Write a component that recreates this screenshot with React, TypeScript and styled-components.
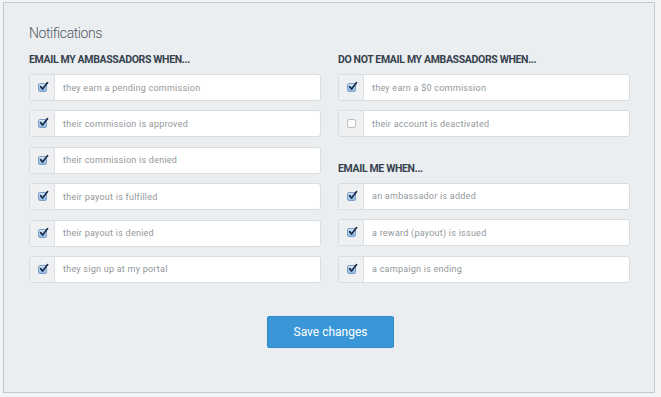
import React from "react";
import styled, { createGlobalStyle } from "styled-components";

const GlobalStyle = createGlobalStyle`
  html, body {
    margin: 0;
    padding: 0;
    background: #f1f3f4;
  }
  body {
    font-family: Roboto, "Open Sans", sans-serif;
  }
`;

const Page = styled.div`
  width: 661px;
  height: 397px;
  box-sizing: border-box;
  padding: 2px 6px 4px 3px;
`;

const Panel = styled.section`
  box-sizing: border-box;
  height: 100%;
  background: #ebeef0;
  border: 1px solid #c3c8cc;
  padding: 20px 24px 0 25px;
`;

const Title = styled.h2`
  margin: 0 0 10px;
  font-family: Roboto, sans-serif;
  font-weight: 300;
  font-size: 14px;
  line-height: 20px;
  color: #4f5962;
  letter-spacing: -0.4px;
`;

const Columns = styled.div`
  display: grid;
  grid-template-columns: 292px 292px;
  column-gap: 17px;
`;

const Column = styled.div`
  display: flex;
  flex-direction: column;
`;

const Heading = styled.h3<{ $spaced?: boolean }>`
  margin: ${(p) => (p.$spaced ? "24.6px" : "0")} 0 7px;
  font-family: Roboto, sans-serif;
  font-weight: 700;
  font-size: 10.5px;
  line-height: 14px;
  color: #36424e;
  letter-spacing: -0.35px;
  text-transform: uppercase;
`;

const List = styled.div`
  display: flex;
  flex-direction: column;
  gap: 9.4px;
`;

const Row = styled.label`
  display: flex;
  height: 27px;
  box-sizing: border-box;
  border: 1px solid #d9dde0;
  border-radius: 3px;
  background: #fff;
  overflow: hidden;
`;

const BoxCell = styled.span`
  width: 24px;
  flex: none;
  display: flex;
  align-items: center;
  justify-content: center;
  background: #eef0f2;
  border-right: 1px solid #dde1e4;
`;

const Box = styled.span<{ $checked: boolean }>`
  width: 9px;
  height: 9px;
  box-sizing: border-box;
  border-radius: 2px;
  border: 1px solid ${(p) => (p.$checked ? "#7f9fc4" : "#b9bec3")};
  background: ${(p) =>
    p.$checked ? "linear-gradient(#cfe3f6, #8fbbe6)" : "#fbfbfb"};
  position: relative;
  svg {
    position: absolute;
    left: 0px;
    top: -3px;
  }
`;

const Label = styled.span`
  display: flex;
  align-items: center;
  padding-left: 8px;
  font-family: Roboto, sans-serif;
  font-size: 9px;
  letter-spacing: 0.25px;
  color: #92979c;
`;

const Footer = styled.div`
  display: flex;
  justify-content: center;
  padding-top: 33px;
`;

const SaveButton = styled.button`
  width: 127px;
  height: 32px;
  margin-left: 2px;
  border: 1px solid #3389c8;
  border-radius: 2px;
  background: #3a97d7;
  color: #fff;
  font-family: Roboto, sans-serif;
  font-size: 12px;
  cursor: pointer;
`;

const Check = () => (
  <svg width="10" height="10" viewBox="0 0 10 10">
    <path
      d="M1.6 5.6 L3.6 8 L8.6 1.6"
      fill="none"
      stroke="#1d2b4a"
      strokeWidth="1.7"
      strokeLinecap="round"
      strokeLinejoin="round"
    />
  </svg>
);

type Option = { label: string; checked: boolean };

const ambassadorsOn: Option[] = [
  { label: "they earn a pending commission", checked: true },
  { label: "their commission is approved", checked: true },
  { label: "their commission is denied", checked: true },
  { label: "their payout is fulfilled", checked: true },
  { label: "their payout is denied", checked: true },
  { label: "they sign up at my portal", checked: true },
];

const ambassadorsOff: Option[] = [
  { label: "they earn a $0 commission", checked: true },
  { label: "their account is deactivated", checked: false },
];

const me: Option[] = [
  { label: "an ambassador is added", checked: true },
  { label: "a reward (payout) is issued", checked: true },
  { label: "a campaign is ending", checked: true },
];

const OptionList = ({ items }: { items: Option[] }) => (
  <List>
    {items.map((o) => (
      <Row key={o.label}>
        <BoxCell>
          <Box $checked={o.checked}>{o.checked && <Check />}</Box>
        </BoxCell>
        <Label>{o.label}</Label>
      </Row>
    ))}
  </List>
);

export default function App() {
  return (
    <>
      <GlobalStyle />
      <Page>
        <Panel>
          <Title>Notifications</Title>
          <Columns>
            <Column>
              <Heading>Email my ambassadors when...</Heading>
              <OptionList items={ambassadorsOn} />
            </Column>
            <Column>
              <Heading>Do not email my ambassadors when...</Heading>
              <OptionList items={ambassadorsOff} />
              <Heading $spaced>Email me when...</Heading>
              <OptionList items={me} />
            </Column>
          </Columns>
          <Footer>
            <SaveButton>Save changes</SaveButton>
          </Footer>
        </Panel>
      </Page>
    </>
  );
}
